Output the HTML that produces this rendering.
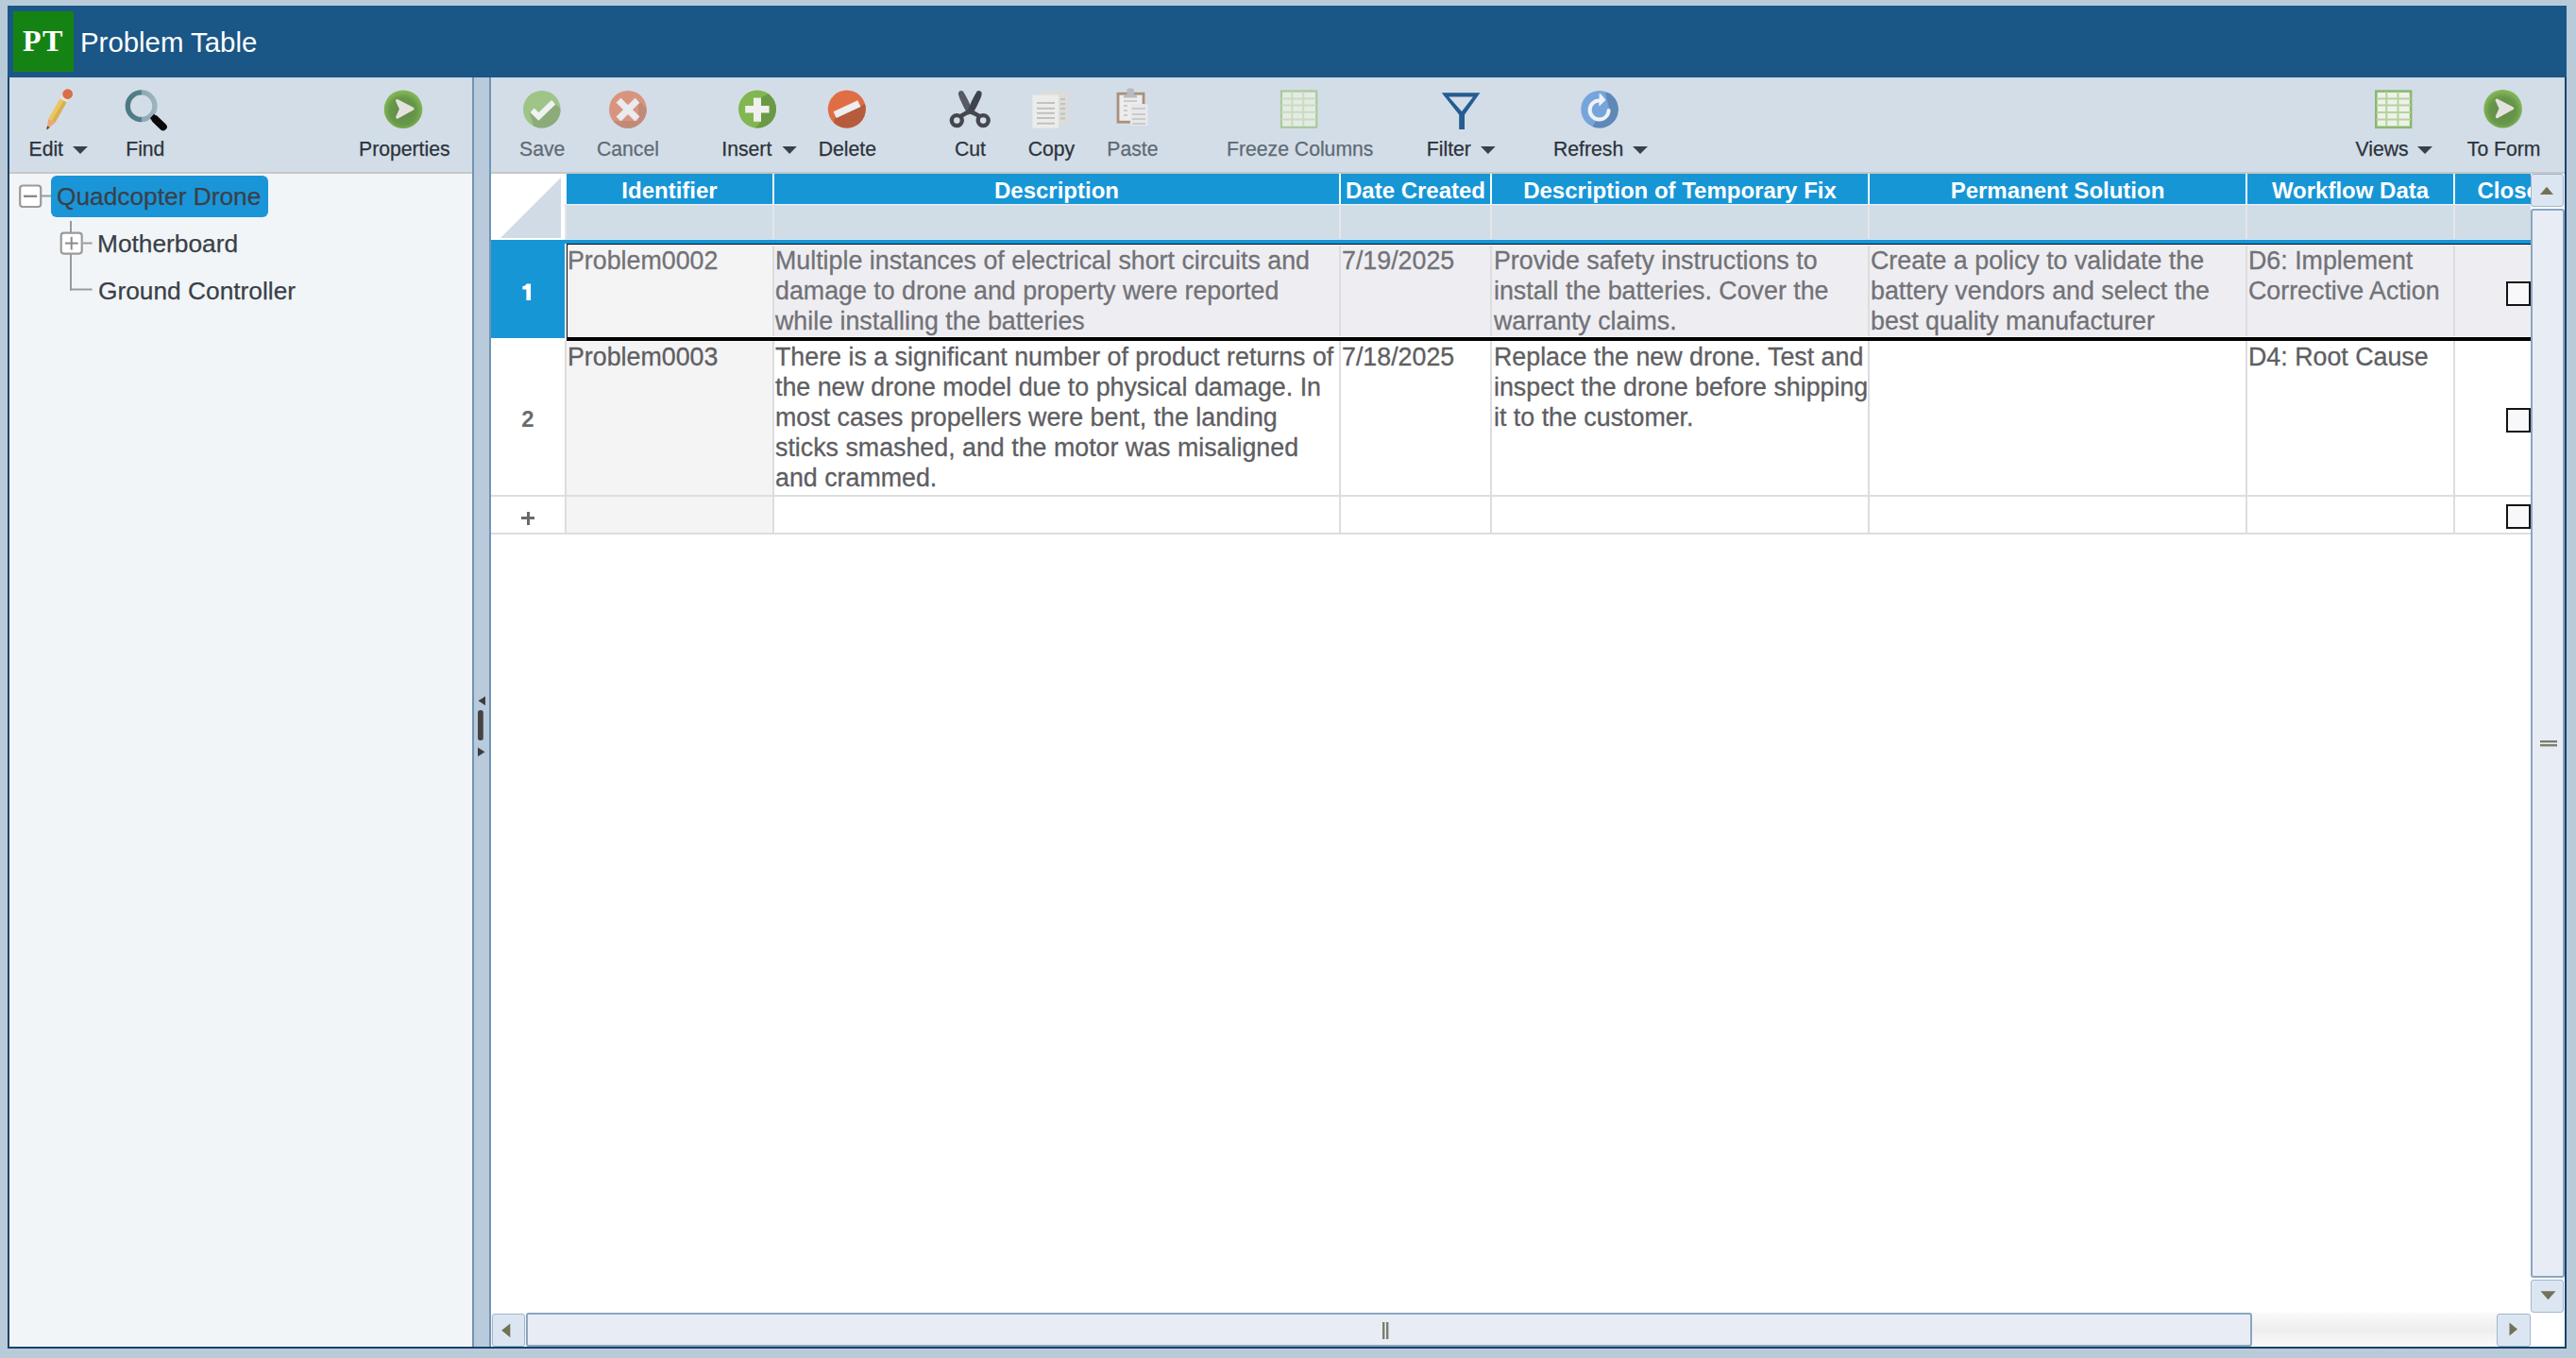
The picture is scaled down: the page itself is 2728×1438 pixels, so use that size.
<!DOCTYPE html>
<html><head><meta charset="utf-8">
<style>
*{margin:0;padding:0;box-sizing:border-box}
html,body{width:2728px;height:1438px;overflow:hidden;background:#b9cad9;font-family:"Liberation Sans",sans-serif}
.a{position:absolute}
.t{position:absolute;white-space:nowrap;line-height:1}
.lbl{font-size:21.2px;-webkit-text-stroke:0.25px currentColor;color:#2c333b;top:147px}
.dis{color:#5f6a74}
.tree{font-size:26.3px;-webkit-text-stroke:0.25px currentColor;color:#3a4048}
.htx{font-size:24px;font-weight:bold;color:#fff;top:189.5px}
.cell{font-size:26.8px;line-height:32px;-webkit-text-stroke:0.3px currentColor;color:#727277;position:absolute;white-space:nowrap}
.c2{color:#5e5e62}
.rn{font-size:24px;font-weight:bold;position:absolute;white-space:nowrap;line-height:1;text-align:center;width:78px;left:520px}
svg{position:absolute;left:0;top:0}
</style></head><body>
<!-- frame & title -->
<div class="a" style="left:8px;top:6px;width:2710px;height:1422px;background:#17426b"></div>
<div class="a" style="left:8px;top:6px;width:2710px;height:76px;background:#1a5686"></div>
<div class="a" style="left:14px;top:12px;width:64px;height:64px;background:#158314"></div>
<div class="t" style="left:24px;top:27px;font-family:'Liberation Serif',serif;font-weight:bold;font-size:32px;letter-spacing:1.5px;color:#fff">PT</div>
<div class="t" style="left:85px;top:30px;font-size:29.4px;color:#fff">Problem Table</div>

<!-- left panel -->
<div class="a" style="left:10px;top:82px;width:490px;height:100px;background:#d3dde7"></div>
<div class="a" style="left:10px;top:182px;width:490px;height:2px;background:#c6c7c7"></div>
<div class="a" style="left:10px;top:184px;width:490px;height:1242px;background:#f2f5f8"></div>

<!-- splitter -->
<div class="a" style="left:500px;top:82px;width:20px;height:1344px;background:#b8cadb;border-left:2px solid #7094b4;border-right:2px solid #7094b4"></div>

<!-- right panel -->
<div class="a" style="left:520px;top:82px;width:2196px;height:100px;background:#d3dde7"></div>
<div class="a" style="left:520px;top:182px;width:2196px;height:2px;background:#c6c7c7"></div>
<div class="a" style="left:520px;top:184px;width:2196px;height:1242px;background:#fff"></div>

<!-- TABLEBG -->

<!-- ICONS -->
<svg width="2728" height="1438" viewBox="0 0 2728 1438" style="left:0;top:0;position:absolute">
<defs>
 <clipPath id="cSave"><circle cx="573.8" cy="115.8" r="19.8"/></clipPath>
 <clipPath id="cCancel"><circle cx="664.9" cy="115.8" r="19.9"/></clipPath>
 <clipPath id="cIns"><circle cx="802" cy="115.6" r="20"/></clipPath>
 <clipPath id="cDel"><circle cx="896.8" cy="115.6" r="20"/></clipPath>
 <clipPath id="cRef"><circle cx="1694" cy="115.8" r="19.8"/></clipPath>
 <radialGradient id="gProp" cx="0.5" cy="0.55" r="0.5">
  <stop offset="0" stop-color="#5f8c45"/><stop offset="0.7" stop-color="#67974a"/><stop offset="1" stop-color="#80b454"/>
 </radialGradient>
 <linearGradient id="gMag" x1="0" x2="1" y1="0" y2="0">
  <stop offset="0" stop-color="#4d7884"/><stop offset="0.5" stop-color="#557f8b"/><stop offset="0.5" stop-color="#8aa8b2"/><stop offset="1" stop-color="#9bb4bd"/>
 </linearGradient>
</defs>
<!-- pencil -->
<g transform="translate(49.4,137.6) rotate(-60.4)">
 <polygon points="0,0 11,-4.1 11,4.1" fill="#eaa77a"/>
 <polygon points="0,0 3.8,-1.5 3.8,1.5" fill="#4a3a30"/>
 <rect x="11" y="-4.1" width="25" height="4.1" fill="#efc45a"/>
 <rect x="11" y="0" width="25" height="4.1" fill="#d6b052"/>
 <rect x="36" y="-4.1" width="3.2" height="8.2" fill="#e8e4de"/>
 <circle cx="44" cy="0.6" r="5.4" fill="#da6d47"/>
</g>
<!-- magnifier -->
<circle cx="149.6" cy="112.2" r="14.3" fill="none" stroke="url(#gMag)" stroke-width="5.4"/>
<line x1="161" y1="123" x2="165" y2="126.8" stroke="#0a0a0a" stroke-width="6.2"/><line x1="164.5" y1="126.3" x2="172.8" y2="134.3" stroke="#0a0a0a" stroke-width="8" stroke-linecap="round"/>
<!-- properties -->
<circle cx="427" cy="115.7" r="20.3" fill="url(#gProp)"/>
<polygon points="420.6,106.6 437,115.2 420.8,124 424.6,115.4" fill="#e4e2dc" stroke="#e4e2dc" stroke-width="3.2" stroke-linejoin="round"/>
<!-- save -->
<g clip-path="url(#cSave)">
 <rect x="550" y="92" width="50" height="50" fill="#9ec487"/>
 <polygon points="560,117 570.5,125 587,109 610,130 590,150 570,150" fill="#8dab7a"/>
</g>
<polyline points="563.6,116.8 570.4,123.4 586.2,108.2" fill="none" stroke="#eef2f0" stroke-width="6.2" stroke-linejoin="miter"/>
<!-- cancel -->
<g clip-path="url(#cCancel)">
 <rect x="640" y="92" width="50" height="50" fill="#d99480"/>
 <polygon points="676,106 690,120 690,142 650,142 650,128 676,128" fill="#c08a78"/>
</g>
<g stroke="#e9ebee" stroke-width="7" stroke-linecap="butt">
 <line x1="655" y1="106.2" x2="675" y2="126"/><line x1="675" y1="106.2" x2="655" y2="126"/>
</g>
<!-- insert -->
<g clip-path="url(#cIns)">
 <rect x="775" y="90" width="55" height="55" fill="#80b750"/>
 <polygon points="806,103.6 830,90 830,145 790,145 806,129" fill="#6a9a46"/>
</g>
<rect x="798" y="103.6" width="8" height="25.1" fill="#f0f0ee"/>
<rect x="789.2" y="112" width="25.4" height="7.5" fill="#f0f0ee"/>
<!-- delete -->
<g clip-path="url(#cDel)">
 <rect x="872" y="90" width="55" height="55" fill="#e06e45"/>
 <polygon points="884,125 912,112 930,100 930,145 880,145" fill="#b55c3c"/>
</g>
<g transform="translate(897,115.6) rotate(-25)">
 <rect x="-14.2" y="-3.8" width="28.4" height="7.6" fill="#eeeef0"/>
</g>
<!-- scissors -->
<path d="M1015,98 Q1016.5,95.2 1019.8,96.5 Q1026,106 1030.2,118.8 L1025.2,121.8 Q1020,113 1016.2,104 Q1014.6,100.5 1015,98 Z" fill="#575a63"/>
<path d="M1039.6,98 Q1038.1,95.2 1034.8,96.5 Q1028.6,106 1024.4,118.8 L1029.4,121.8 Q1034.6,113 1038.4,104 Q1040,100.5 1039.6,98 Z" fill="#40434c"/>
<g fill="none" stroke="#45474f" stroke-width="4.4">
 <circle cx="1013.3" cy="127.6" r="5.5"/>
 <circle cx="1041.2" cy="127.6" r="5.5"/>
 <path d="M1017.5,123 L1027,117.5"/>
 <path d="M1037,123 L1027.5,117.5"/>
</g>
<!-- copy -->
<rect x="1104.2" y="95.7" width="28" height="36" fill="#dcdcda"/>
<rect x="1093.4" y="100.6" width="27.6" height="35" fill="#ececea"/>
<g stroke="#bebeba" stroke-width="1.8">
 <line x1="1098" y1="109" x2="1117" y2="109"/><line x1="1098" y1="114.8" x2="1117" y2="114.8"/>
 <line x1="1098" y1="119.8" x2="1117" y2="119.8"/><line x1="1098" y1="125" x2="1117" y2="125"/>
 <line x1="1098" y1="130.7" x2="1117" y2="130.7"/>
 <line x1="1123" y1="105" x2="1128" y2="105"/><line x1="1123" y1="110" x2="1128" y2="110"/>
 <line x1="1123" y1="115" x2="1128" y2="115"/><line x1="1123" y1="120.5" x2="1128" y2="120.5"/>
 <line x1="1123" y1="125.5" x2="1128" y2="125.5"/>
</g>
<!-- paste -->
<rect x="1184" y="99.2" width="27" height="30" fill="#ededed" stroke="#a8907e" stroke-width="2.8"/>
<rect x="1193.4" y="93.5" width="7.6" height="9.5" rx="2" fill="#b8bcc0"/>
<rect x="1190" y="100.5" width="14" height="3" fill="#b8bcc0"/>
<rect x="1196.9" y="110.1" width="18.7" height="23" fill="#e6e8ea"/>
<g stroke="#c8c8c8" stroke-width="1.8">
 <line x1="1190" y1="107" x2="1204" y2="107"/>
 <line x1="1190" y1="112" x2="1194" y2="112"/><line x1="1190" y1="117" x2="1194" y2="117"/><line x1="1190" y1="122" x2="1194" y2="122"/>
 <line x1="1199" y1="115" x2="1213" y2="115"/><line x1="1199" y1="121" x2="1213" y2="121"/>
 <line x1="1199" y1="126" x2="1213" y2="126"/><line x1="1199" y1="131" x2="1213" y2="131"/>
</g>
<!-- freeze grid -->
<rect x="1357" y="96.5" width="37.2" height="38.3" fill="#e4ebe4" stroke="#a9c99a" stroke-width="2.2"/>
<g stroke="#c8dcc0" stroke-width="2">
 <line x1="1368.4" y1="97" x2="1368.4" y2="134"/><line x1="1380.2" y1="97" x2="1380.2" y2="134"/>
 <line x1="1357" y1="104.4" x2="1394" y2="104.4"/><line x1="1357" y1="111.4" x2="1394" y2="111.4"/>
 <line x1="1357" y1="118.7" x2="1394" y2="118.7"/><line x1="1357" y1="126.5" x2="1394" y2="126.5"/>
</g>
<!-- filter -->
<path fill-rule="evenodd" fill="#245d91" d="M1526.7,98.3 L1567.4,98.3 L1551,121.5 L1551,137 L1545.2,137 L1545.2,121.5 Z M1534.2,102.6 L1560,102.6 L1548,118 Z"/>
<!-- refresh -->
<g clip-path="url(#cRef)">
 <rect x="1669" y="90" width="55" height="55" fill="#76a5db"/>
 <polygon points="1700,99 1724,90 1724,145 1680,145 1690,128 1705,118" fill="#5f88b8"/>
</g>
<path d="M1703.6,117 A10,10 0 1 1 1693.6,106.5" fill="none" stroke="#eef2f8" stroke-width="4" stroke-linecap="round"/>
<polygon points="1694.2,99 1700,105.8 1693.8,111.8" fill="#eef2f8" stroke="#eef2f8" stroke-width="1" stroke-linejoin="round"/>
<!-- views grid -->
<rect x="2516.3" y="96.6" width="36.8" height="38.2" fill="#eef2e8" stroke="#8ab870" stroke-width="2.6"/>
<g stroke="#b5d29e" stroke-width="2">
 <line x1="2527.3" y1="97" x2="2527.3" y2="134"/><line x1="2539.5" y1="97" x2="2539.5" y2="134"/>
 <line x1="2516.5" y1="104.4" x2="2553" y2="104.4"/><line x1="2516.5" y1="111.6" x2="2553" y2="111.6"/>
 <line x1="2516.5" y1="119" x2="2553" y2="119"/><line x1="2516.5" y1="126.5" x2="2553" y2="126.5"/>
</g>
<!-- to form -->
<circle cx="2650.6" cy="115.2" r="20.3" fill="url(#gProp)"/>
<polygon points="2644.2,106.1 2660.6,114.7 2644.4,123.5 2648.2,114.9" fill="#e4e2dc" stroke="#e4e2dc" stroke-width="3.2" stroke-linejoin="round"/>
<!-- dropdown triangles -->
<g fill="#3b4047">
 <polygon points="77,155 93,155 85,163"/>
 <polygon points="828.5,155 843.8,155 836.2,163"/>
 <polygon points="1568,155 1583.7,155 1575.8,163"/>
 <polygon points="1729,155 1745,155 1737,163"/>
 <polygon points="2560,155 2576,155 2568,163"/>
</g>
<!-- tree lines -->
<g stroke="#9a9a9a" stroke-width="2" fill="none">
 <line x1="44" y1="207.5" x2="54" y2="207.5"/>
 <line x1="75" y1="234" x2="75" y2="246"/>
 <line x1="75" y1="269" x2="75" y2="307.5"/>
 <line x1="74" y1="306.5" x2="97.6" y2="306.5"/>
 <line x1="88" y1="257.5" x2="97.6" y2="257.5"/>
</g>
<rect x="21.2" y="196.5" width="22" height="22.5" rx="3" fill="#fff" stroke="#9a9a9a" stroke-width="2.2"/>
<line x1="25" y1="207.8" x2="39.2" y2="207.8" stroke="#8a8a8a" stroke-width="2.4"/>
<rect x="64.7" y="246.6" width="22" height="22" rx="3" fill="#fff" stroke="#9a9a9a" stroke-width="2.2"/>
<line x1="69" y1="257.6" x2="82.7" y2="257.6" stroke="#8a8a8a" stroke-width="2"/>
<line x1="75.7" y1="250.8" x2="75.7" y2="264.5" stroke="#8a8a8a" stroke-width="2"/>
<!-- splitter grip -->
<polygon points="514,737.3 514,747 506.5,742.1" fill="#3d3d3d"/>
<rect x="506" y="752" width="5.8" height="32" rx="2.5" fill="#444"/>
<polygon points="506,791.4 506,801 513.5,796.2" fill="#3d3d3d"/>
</svg>


<!-- LABELS -->
<div class="t lbl" style="left:30.5px">Edit</div>
<div class="t lbl" style="left:133.2px">Find</div>
<div class="t lbl" style="left:380px">Properties</div>
<div class="t lbl dis" style="left:550px">Save</div>
<div class="t lbl dis" style="left:632px">Cancel</div>
<div class="t lbl" style="left:764.3px">Insert</div>
<div class="t lbl" style="left:866.7px">Delete</div>
<div class="t lbl" style="left:1010.9px">Cut</div>
<div class="t lbl" style="left:1088.7px">Copy</div>
<div class="t lbl dis" style="left:1172.3px">Paste</div>
<div class="t lbl dis" style="left:1299px">Freeze Columns</div>
<div class="t lbl" style="left:1510.8px">Filter</div>
<div class="t lbl" style="left:1645px">Refresh</div>
<div class="t lbl" style="left:2494.5px">Views</div>
<div class="t lbl" style="left:2612.8px">To Form</div>

<!-- TREE -->
<div class="a" style="left:54px;top:186px;width:230px;height:44px;background:#1a96d8;border-radius:6px"></div>
<div class="t tree" style="left:60px;top:195px">Quadcopter Drone</div>
<div class="t tree" style="left:103px;top:245px">Motherboard</div>
<div class="t tree" style="left:104px;top:294.5px">Ground Controller</div>

<!-- TABLE -->
<div class="a" style="left:0;top:0;width:2680px;height:1390px;overflow:hidden">
<svg width="2680" height="300" style="left:0;top:0"><polygon points="530,252 594,188 594,252" fill="#d0dbe5"/></svg>
<div class="a" style="left:600px;top:184px;width:2080px;height:32px;background:#1796d6"></div>
<div class="a" style="left:818px;top:184px;width:2px;height:32px;background:#f4fbff"></div>
<div class="a" style="left:1418px;top:184px;width:2px;height:32px;background:#f4fbff"></div>
<div class="a" style="left:1578px;top:184px;width:2px;height:32px;background:#f4fbff"></div>
<div class="a" style="left:1978px;top:184px;width:2px;height:32px;background:#f4fbff"></div>
<div class="a" style="left:2378px;top:184px;width:2px;height:32px;background:#f4fbff"></div>
<div class="a" style="left:2598px;top:184px;width:2px;height:32px;background:#f4fbff"></div>
<div class="a" style="left:598px;top:216px;width:2082px;height:1px;background:#e2f1fb"></div>
<div class="a" style="left:598px;top:217px;width:2082px;height:1px;background:#e0e0e2"></div>
<div class="a" style="left:598px;top:218px;width:2082px;height:35px;background:#d0dce6"></div>
<div class="a" style="left:598px;top:218px;width:2px;height:35px;background:#e4e6e9"></div>
<div class="a" style="left:818px;top:218px;width:2px;height:35px;background:#e4e6e9"></div>
<div class="a" style="left:1418px;top:218px;width:2px;height:35px;background:#e4e6e9"></div>
<div class="a" style="left:1578px;top:218px;width:2px;height:35px;background:#e4e6e9"></div>
<div class="a" style="left:1978px;top:218px;width:2px;height:35px;background:#e4e6e9"></div>
<div class="a" style="left:2378px;top:218px;width:2px;height:35px;background:#e4e6e9"></div>
<div class="a" style="left:2598px;top:218px;width:2px;height:35px;background:#e4e6e9"></div>
<div class="a" style="left:598px;top:253px;width:2082px;height:1px;background:#cfe9f8"></div>
<div class="a" style="left:520px;top:254px;width:2160px;height:4px;background:#1796d6"></div>
<div class="a" style="left:520px;top:254px;width:78px;height:104px;background:#1796d6"></div>
<div class="a" style="left:600px;top:258px;width:218px;height:99px;background:#f4f4f5"></div>
<div class="a" style="left:820px;top:258px;width:1860px;height:99px;background:#eeeef2"></div>
<div class="a" style="left:600px;top:361px;width:218px;height:163px;background:#f4f4f5"></div>
<div class="a" style="left:600px;top:526px;width:218px;height:38px;background:#f4f4f5"></div>
<div class="a" style="left:598px;top:361px;width:2px;height:205px;background:#dcdde1"></div>
<div class="a" style="left:818px;top:258px;width:2px;height:308px;background:#dcdde1"></div>
<div class="a" style="left:1418px;top:258px;width:2px;height:308px;background:#dcdde1"></div>
<div class="a" style="left:1578px;top:258px;width:2px;height:308px;background:#dcdde1"></div>
<div class="a" style="left:1978px;top:258px;width:2px;height:308px;background:#dcdde1"></div>
<div class="a" style="left:2378px;top:258px;width:2px;height:308px;background:#dcdde1"></div>
<div class="a" style="left:2598px;top:258px;width:2px;height:308px;background:#dcdde1"></div>
<div class="a" style="left:520px;top:524px;width:2160px;height:2px;background:#dcdde1"></div>
<div class="a" style="left:520px;top:564px;width:2160px;height:2px;background:#dcdde1"></div>
<div class="a" style="left:600px;top:258px;width:2080px;height:1px;background:#05050a"></div><div class="a" style="left:601px;top:259px;width:2079px;height:1px;background:#fafafa"></div>
<div class="a" style="left:600px;top:258px;width:1px;height:103px;background:#05050a"></div><div class="a" style="left:601px;top:259px;width:1px;height:97px;background:#fafafa"></div><div class="a" style="left:598px;top:258px;width:2px;height:103px;background:#f0f8fd"></div>
<div class="a" style="left:601px;top:356px;width:2079px;height:1px;background:#fafafa"></div><div class="a" style="left:600px;top:357px;width:2080px;height:4px;background:#000"></div>
<div class="t htx" style="left:600px;width:218px;text-align:center">Identifier</div>
<div class="t htx" style="left:820px;width:598px;text-align:center">Description</div>
<div class="t htx" style="left:1420px;width:158px;text-align:center">Date Created</div>
<div class="t htx" style="left:1580px;width:398px;text-align:center">Description of Temporary Fix</div>
<div class="t htx" style="left:1980px;width:398px;text-align:center">Permanent Solution</div>
<div class="t htx" style="left:2380px;width:218px;text-align:center">Workflow Data</div>
<div class="t htx" style="left:2600px;width:127px;text-align:center">Closed</div>
<svg width="600" height="330" style="position:absolute;left:0;top:0"><path d="M557.4,300.5 L562.1,300.5 L562.1,318 L557.4,318 L557.4,306.6 L553.4,306.6 L553.4,303.3 Q556.6,303 557.6,300.5 Z" fill="#fff"/></svg>
<div class="rn" style="top:432px;color:#6b6b6e">2</div>
<div class="a" style="left:552px;top:547px;width:14px;height:3px;background:#6b6b6e"></div>
<div class="a" style="left:557.5px;top:542px;width:3px;height:14px;background:#6b6b6e"></div>
<div class="cell" style="left:601px;top:259.7px">Problem0002</div>
<div class="cell" style="left:821px;top:259.7px">Multiple instances of electrical short circuits and<br>damage to drone and property were reported<br>while installing the batteries</div>
<div class="cell" style="left:1421px;top:259.7px">7/19/2025</div>
<div class="cell" style="left:1582px;top:259.7px">Provide safety instructions to<br>install the batteries. Cover the<br>warranty claims.</div>
<div class="cell" style="left:1981px;top:259.7px">Create a policy to validate the<br>battery vendors and select the<br>best quality manufacturer</div>
<div class="cell" style="left:2381px;top:259.7px">D6: Implement<br>Corrective Action</div>
<div class="cell c2" style="left:601px;top:361.7px">Problem0003</div>
<div class="cell c2" style="left:821px;top:361.7px">There is a significant number of product returns of<br>the new drone model due to physical damage. In<br>most cases propellers were bent, the landing<br>sticks smashed, and the motor was misaligned<br>and crammed.</div>
<div class="cell c2" style="left:1421px;top:361.7px">7/18/2025</div>
<div class="cell c2" style="left:1582px;top:361.7px">Replace the new drone. Test and<br>inspect the drone before shipping<br>it to the customer.</div>
<div class="cell c2" style="left:2381px;top:361.7px">D4: Root Cause</div>
<div class="a" style="left:2654px;top:298px;width:26px;height:26px;border:2px solid #141414;background:#f8f8fa"></div>
<div class="a" style="left:2654px;top:432px;width:26px;height:26px;border:2px solid #141414;background:#f8f8fa"></div>
<div class="a" style="left:2654px;top:534px;width:26px;height:26px;border:2px solid #141414;background:#f8f8fa"></div>
</div>
<!-- vertical scrollbar -->
<div class="a" style="left:2680px;top:184px;width:36px;height:1206px;background:#fff"></div>
<div class="a" style="left:2680px;top:184px;width:35px;height:35px;background:#dce6f3;border:1.5px solid #a2b6cc;border-radius:3px"></div>
<div class="a" style="left:2680px;top:220.5px;width:35.5px;height:1132px;background:#e8edf5;border:2px solid #8aa6c0;border-radius:3px"></div>
<div class="a" style="left:2680px;top:1354.5px;width:35px;height:35px;background:#dce6f3;border:1.5px solid #a2b6cc;border-radius:3px"></div>
<!-- horizontal scrollbar -->
<div class="a" style="left:520px;top:1390px;width:2160px;height:36px;background:linear-gradient(#fafafa,#eeeeee 50%,#fafafa)"></div>
<div class="a" style="left:521px;top:1390.5px;width:34.5px;height:35px;background:#dce6f3;border:1.5px solid #a2b6cc;border-radius:3px"></div>
<div class="a" style="left:556.5px;top:1390px;width:1828px;height:35.5px;background:#e8edf5;border:2px solid #8aa6c0;border-radius:3px"></div>
<div class="a" style="left:2644px;top:1390.5px;width:35.5px;height:35px;background:#dce6f3;border:1.5px solid #a2b6cc;border-radius:3px"></div>
<div class="a" style="left:2680px;top:1390px;width:36px;height:36px;background:#fff"></div>
<svg width="2728" height="1438" style="position:absolute;left:0;top:0">
 <g fill="#727256">
  <polygon points="2689.9,206 2704,206 2697,197.7"/>
  <polygon points="2690.5,1367.2 2706.5,1367.2 2698.5,1376.3"/>
  <polygon points="531.2,1408.8 540.3,1401.5 540.3,1416.2"/>
  <polygon points="2657.5,1400.5 2657.5,1414.5 2666,1407.5"/>
 </g>
 <g fill="#7c7f6e">
  <rect x="2690" y="784" width="18" height="2.4"/>
  <rect x="2690" y="788" width="18" height="2.4"/>
  <rect x="1464" y="1400" width="2.4" height="18"/>
  <rect x="1468" y="1400" width="2.4" height="18"/>
 </g>
</svg>

</body></html>
